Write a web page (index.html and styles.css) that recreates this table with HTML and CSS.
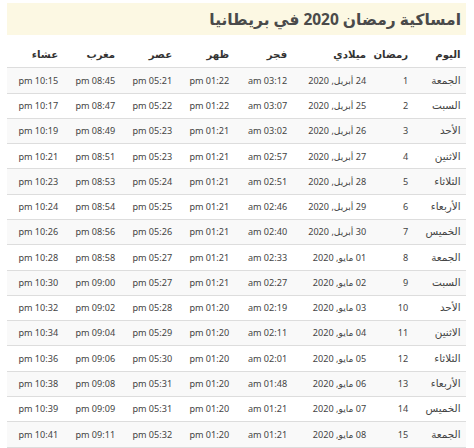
FILE: index.html
```html
<!DOCTYPE html>
<html lang="ar" dir="rtl">
<head>
<meta charset="utf-8">
<title>امساكية رمضان 2020 في بريطانيا</title>
<link rel="stylesheet" href="styles.css">
</head>
<body>
<div class="page">
  <h1 class="title">امساكية رمضان 2020 في بريطانيا</h1>
  <table class="schedule">
    <colgroup>
      <col class="c-day"><col class="c-num"><col class="c-date"><col class="c-t1"><col class="c-t2"><col class="c-t3"><col class="c-t4"><col class="c-t5">
    </colgroup>
    <thead>
      <tr><th>اليوم</th><th>رمضان</th><th>ميلادي</th><th>فجر</th><th>ظهر</th><th>عصر</th><th>مغرب</th><th>عشاء</th></tr>
    </thead>
    <tbody>
      <tr><td class="day">الجمعة</td><td>1</td><td>24 أبريل, 2020</td><td>03:12 am</td><td>01:22 pm</td><td>05:21 pm</td><td>08:45 pm</td><td>10:15 pm</td></tr>
      <tr><td class="day">السبت</td><td>2</td><td>25 أبريل, 2020</td><td>03:07 am</td><td>01:22 pm</td><td>05:22 pm</td><td>08:47 pm</td><td>10:17 pm</td></tr>
      <tr><td class="day">الأحد</td><td>3</td><td>26 أبريل, 2020</td><td>03:02 am</td><td>01:21 pm</td><td>05:23 pm</td><td>08:49 pm</td><td>10:19 pm</td></tr>
      <tr><td class="day">الاثنين</td><td>4</td><td>27 أبريل, 2020</td><td>02:57 am</td><td>01:21 pm</td><td>05:23 pm</td><td>08:51 pm</td><td>10:21 pm</td></tr>
      <tr><td class="day">الثلاثاء</td><td>5</td><td>28 أبريل, 2020</td><td>02:51 am</td><td>01:21 pm</td><td>05:24 pm</td><td>08:53 pm</td><td>10:23 pm</td></tr>
      <tr><td class="day">الأربعاء</td><td>6</td><td>29 أبريل, 2020</td><td>02:46 am</td><td>01:21 pm</td><td>05:25 pm</td><td>08:54 pm</td><td>10:24 pm</td></tr>
      <tr><td class="day">الخميس</td><td>7</td><td>30 أبريل, 2020</td><td>02:40 am</td><td>01:21 pm</td><td>05:26 pm</td><td>08:56 pm</td><td>10:26 pm</td></tr>
      <tr><td class="day">الجمعة</td><td>8</td><td>01 مايو, 2020</td><td>02:33 am</td><td>01:21 pm</td><td>05:27 pm</td><td>08:58 pm</td><td>10:28 pm</td></tr>
      <tr><td class="day">السبت</td><td>9</td><td>02 مايو, 2020</td><td>02:27 am</td><td>01:21 pm</td><td>05:27 pm</td><td>09:00 pm</td><td>10:30 pm</td></tr>
      <tr><td class="day">الأحد</td><td>10</td><td>03 مايو, 2020</td><td>02:19 am</td><td>01:20 pm</td><td>05:28 pm</td><td>09:02 pm</td><td>10:32 pm</td></tr>
      <tr><td class="day">الاثنين</td><td>11</td><td>04 مايو, 2020</td><td>02:11 am</td><td>01:20 pm</td><td>05:29 pm</td><td>09:04 pm</td><td>10:34 pm</td></tr>
      <tr><td class="day">الثلاثاء</td><td>12</td><td>05 مايو, 2020</td><td>02:01 am</td><td>01:20 pm</td><td>05:30 pm</td><td>09:06 pm</td><td>10:36 pm</td></tr>
      <tr><td class="day">الأربعاء</td><td>13</td><td>06 مايو, 2020</td><td>01:48 am</td><td>01:20 pm</td><td>05:31 pm</td><td>09:08 pm</td><td>10:38 pm</td></tr>
      <tr><td class="day">الخميس</td><td>14</td><td>07 مايو, 2020</td><td>01:21 am</td><td>01:20 pm</td><td>05:31 pm</td><td>09:09 pm</td><td>10:39 pm</td></tr>
      <tr><td class="day">الجمعة</td><td>15</td><td>08 مايو, 2020</td><td>01:21 am</td><td>01:20 pm</td><td>05:32 pm</td><td>09:11 pm</td><td>10:41 pm</td></tr>
    </tbody>
  </table>
</div>
</body>
</html>
```
FILE: styles.css
```css
html, body {
  margin: 0;
  padding: 0;
  background: #ffffff;
}
body {
  font-family: "Noto Sans", "DejaVu Sans", sans-serif;
  color: #333333;
}
.page {
  width: 459px;
  padding: 3px 8px 0 7px;
}
.title {
  margin: 0 0 8px 0;
  height: 32px;
  line-height: 32px;
  padding: 0 5px;
  background: #fcf8e3;
  color: #4a4a4a;
  font-size: 15.5px;
  font-weight: bold;
  text-align: right;
}
.schedule {
  width: 459px;
  table-layout: fixed;
  border-collapse: collapse;
  border-spacing: 0;
  font-size: 9.1px;
  line-height: 13.5px;
}
.c-day { width: 52.5px; }
.c-num { width: 42px; }
.c-date { width: 79px; }
.c-t1 { width: 58px; }
.c-t2 { width: 57px; }
.c-t3 { width: 57px; }
.c-t4 { width: 57px; }
.c-t5 { width: 56.5px; }
.schedule th,
.schedule td {
  padding: 5.4px;
  text-align: right;
  white-space: nowrap;
  vertical-align: middle;
}
.schedule th {
  font-size: 10.2px;
  font-weight: bold;
  color: #333333;
  border-bottom: 1.5px solid #dddddd;
}
.schedule td {
  color: #444444;
  border-top: 1px solid #dddddd;
}
.schedule td.day {
  font-size: 10.4px;
}
.schedule tbody tr:nth-child(odd) td {
  background: #f9f9f9;
}
.schedule tbody tr:last-child td {
  border-bottom: 1px solid #dddddd;
}
```
